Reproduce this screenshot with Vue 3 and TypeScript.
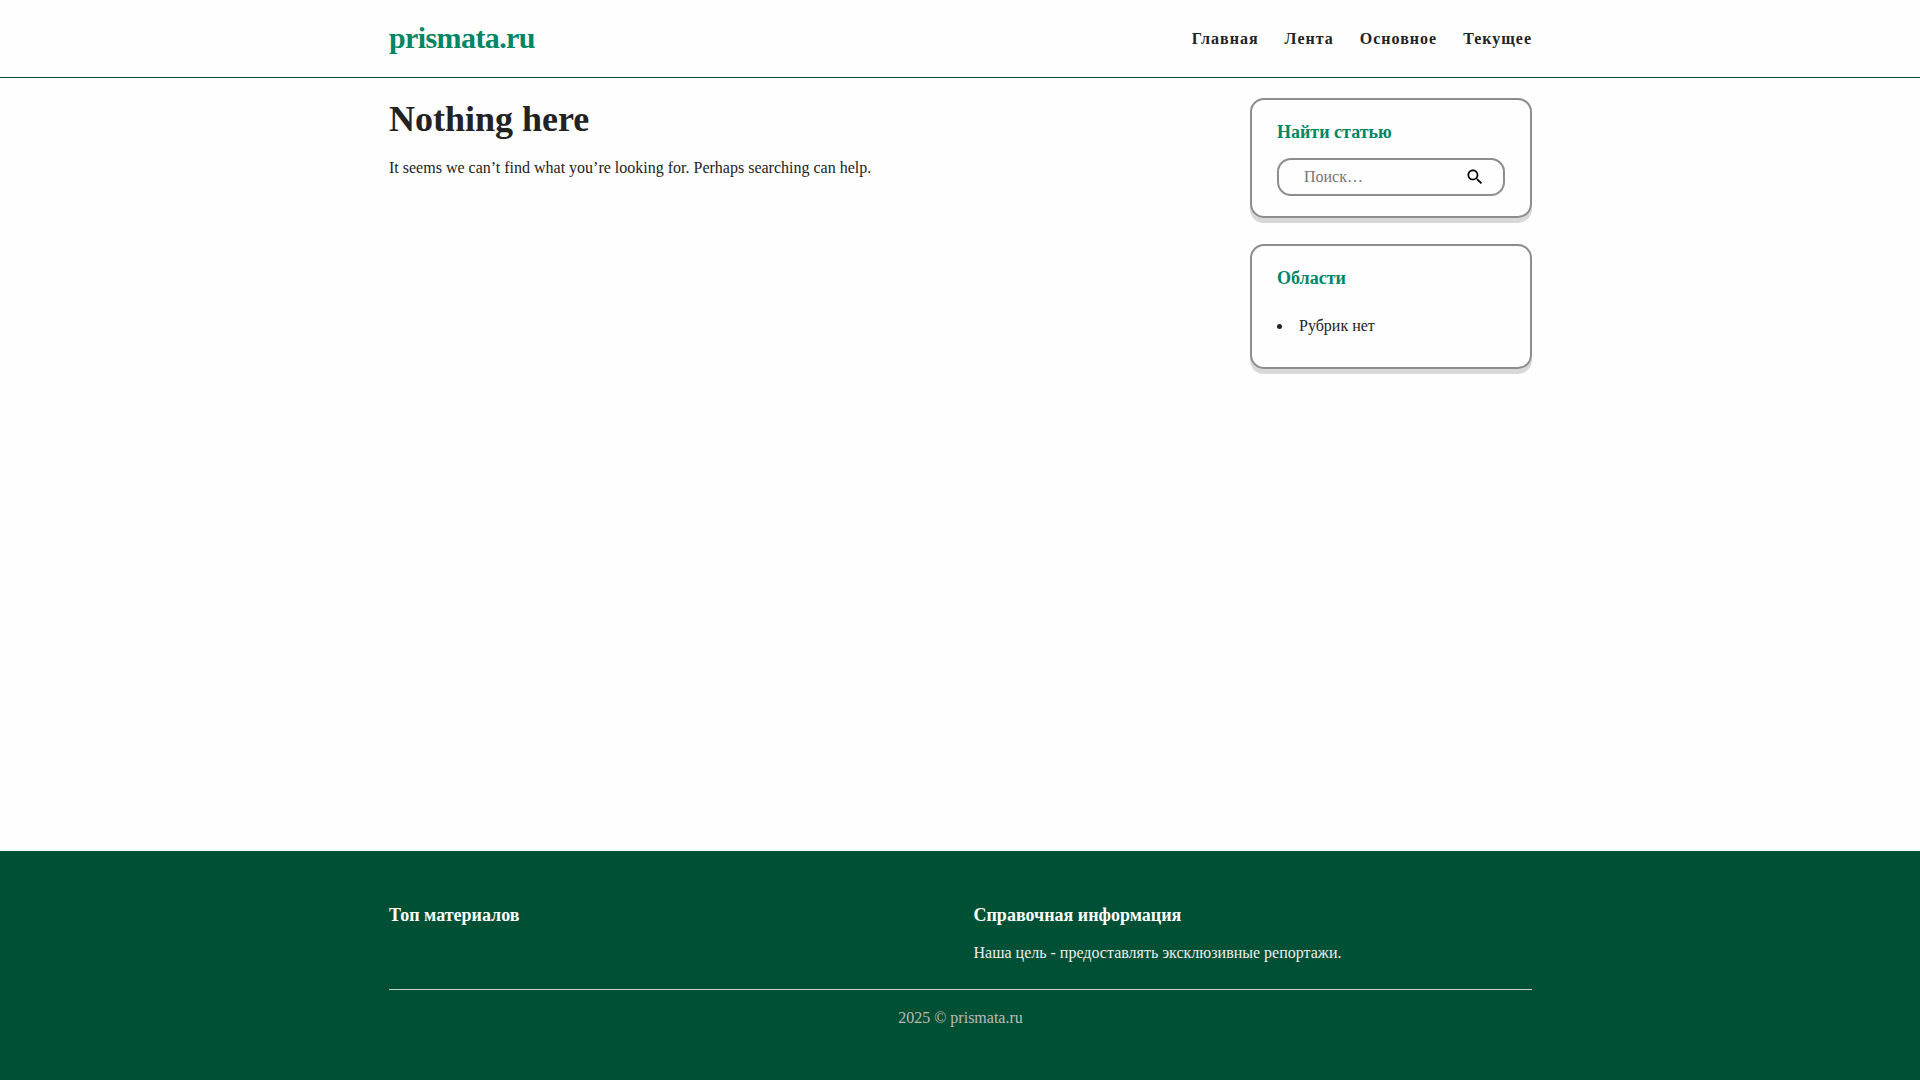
<script setup lang="ts">
import { ref } from 'vue'

interface NavItem {
  label: string
  href: string
}

const siteName = 'prismata.ru'
const year = 2025
const query = ref('')

const navItems: NavItem[] = [
  { label: 'Главная', href: '#home' },
  { label: 'Лента', href: '#feed' },
  { label: 'Основное', href: '#main' },
  { label: 'Текущее', href: '#current' },
]
</script>

<template>
  <div class="page">
    <header class="site-header">
      <div class="container header-row">
        <a class="logo" href="#home">{{ siteName }}</a>
        <nav class="nav" aria-label="Меню">
          <a v-for="item in navItems" :key="item.href" :href="item.href">{{ item.label }}</a>
        </nav>
      </div>
    </header>

    <div class="container layout">
      <main class="content">
        <h1>Nothing here</h1>
        <p>It seems we can’t find what you’re looking for. Perhaps searching can help.</p>
      </main>

      <aside class="sidebar">
        <section class="card">
          <h2><label for="search">Найти статью</label></h2>
          <form class="search" role="search" @submit.prevent>
            <input id="search" v-model="query" type="text" placeholder="Поиск…" />
            <button type="submit" aria-label="Поиск">
              <svg viewBox="0 0 24 24" width="20" height="20" aria-hidden="true">
                <path
                  d="M15.5 14h-.79l-.28-.27C15.41 12.59 16 11.11 16 9.5 16 5.91 13.09 3 9.5 3S3 5.91 3 9.5 5.91 16 9.5 16c1.61 0 3.09-.59 4.23-1.57l.27.28v.79l5 4.99L20.49 19l-4.99-5zm-6 0C7.01 14 5 11.99 5 9.5S7.01 5 9.5 5 14 7.01 14 9.5 11.99 14 9.5 14z"
                />
              </svg>
            </button>
          </form>
        </section>

        <section class="card">
          <h2>Области</h2>
          <ul>
            <li>Рубрик нет</li>
          </ul>
        </section>
      </aside>
    </div>

    <footer class="site-footer">
      <div class="container">
        <div class="footer-columns">
          <section>
            <h2>Топ материалов</h2>
          </section>
          <section>
            <h2>Справочная информация</h2>
            <p>Наша цель - предоставлять эксклюзивные репортажи.</p>
          </section>
        </div>
        <p class="copyright">{{ year }} © {{ siteName }}</p>
      </div>
    </footer>
  </div>
</template>

<style>
body {
  margin: 0;
  background: #fefefe;
}
</style>

<style scoped>
.page {
  display: flex;
  flex-direction: column;
  min-height: 100vh;
  color: #222;
  font: 16px/26px "Liberation Serif", "Times New Roman", serif;
}

.container {
  box-sizing: border-box;
  width: 100%;
  max-width: 1194px;
  margin: 0 auto;
  padding: 0 25px 0 26px;
}

h1,
h2,
p,
ul {
  margin: 0;
}

a {
  color: inherit;
  text-decoration: none;
}

.site-header {
  border-bottom: 1px solid #005035;
}

.header-row {
  display: flex;
  align-items: center;
  justify-content: space-between;
  flex-wrap: wrap;
  gap: 0 26px;
  min-height: 77px;
}

.logo {
  padding-bottom: 2px;
  color: #008664;
  font-size: 30px;
  font-weight: bold;
  letter-spacing: -0.02em;
}

.nav {
  display: flex;
  flex-wrap: wrap;
  gap: 0 26px;
  font-weight: bold;
  letter-spacing: 1px;
}

.layout {
  display: flex;
  flex: 1;
  flex-wrap: wrap;
  gap: 26px;
  padding-top: 20px;
  padding-bottom: 52px;
}

.content {
  flex: 1 1 480px;
}

h1 {
  margin-bottom: 15px;
  font-size: 36px;
  line-height: 42px;
}

h2 {
  font-size: 18px;
  line-height: 24px;
}

.sidebar {
  display: flex;
  flex: 0 0 282px;
  flex-direction: column;
  gap: 26px;
  min-width: 0;
}

.card {
  padding: 20px 25px;
  border: 2px solid #8d8d8d;
  border-radius: 14px;
  box-shadow: 0 5px 0 #d8d8d8;
}

.card h2 {
  margin-bottom: 14px;
  color: #008664;
}

.search {
  display: flex;
  align-items: center;
  box-sizing: border-box;
  height: 38px;
  padding: 0 18px 0 25px;
  border: 2px solid #8d8d8d;
  border-radius: 14px;
}

.search input {
  flex: 1;
  width: 100%;
  min-width: 0;
  padding: 0;
  border: 0;
  outline: 0;
  background: none;
  color: inherit;
  font: inherit;
}

.search input::placeholder {
  color: #757575;
}

.search button {
  display: flex;
  padding: 0;
  border: 0;
  background: none;
  cursor: pointer;
}

.card ul {
  padding: 9px 0 8px;
  list-style: disc inside;
}

.site-footer {
  padding: 52px 0 49px;
  background: #005035;
  color: #fff;
}

.footer-columns {
  display: grid;
  grid-template-columns: repeat(2, 1fr);
  gap: 26px;
  padding-bottom: 23px;
  border-bottom: 1px solid #ccc;
}

.footer-columns h2 {
  margin-bottom: 13px;
}

.footer-columns p {
  color: #eee;
}

.copyright {
  padding-top: 15px;
  color: #bbb;
  text-align: center;
}
</style>
